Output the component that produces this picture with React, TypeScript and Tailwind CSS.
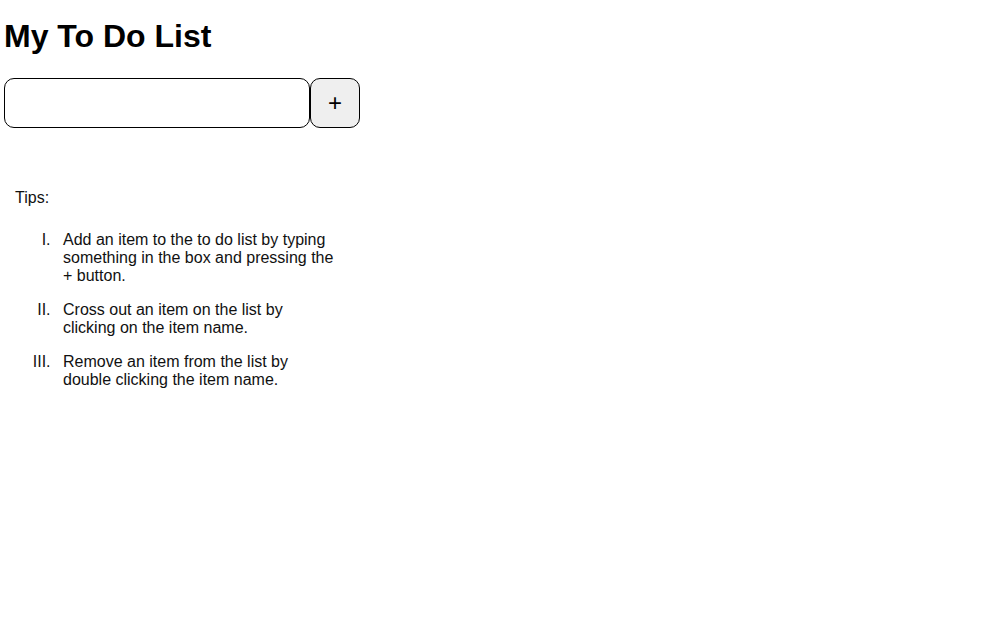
import React, { useState } from 'react';

export default function App() {
  const [text, setText] = useState('');

  return (
    <div className="min-h-screen bg-white pl-[4px] text-black" style={{ fontFamily: '"Liberation Sans", Arial, sans-serif' }}>
      <h1 className="mt-[18px] text-[32px] font-bold leading-[37px]">My To Do List</h1>

      {/* Add row */}
      <div className="mt-[23px] flex">
        <input
          value={text}
          onChange={(e) => setText(e.target.value)}
          className="h-[50px] w-[306px] rounded-[10px] border border-black px-2 text-base outline-none"
        />
        <button className="h-[50px] w-[50px] rounded-[10px] border border-black bg-[#efefef] text-[24px] leading-none">
          +
        </button>
      </div>

      {/* Tips */}
      <div className="mt-[61px] w-[332px] pl-[11px] text-base leading-[18px] text-[#111]">
        <p>Tips:</p>
        <ol className="mt-[24px] list-[upper-roman] pl-[40px]">
          <li className="mb-[16px] pl-[8px]">Add an item to the to do list by typing something in the box and pressing the + button.</li>
          <li className="mb-[16px] pl-[8px]">Cross out an item on the list by clicking on the item name.</li>
          <li className="pl-[8px]">Remove an item from the list by double clicking the item name.</li>
        </ol>
      </div>
    </div>
  );
}
